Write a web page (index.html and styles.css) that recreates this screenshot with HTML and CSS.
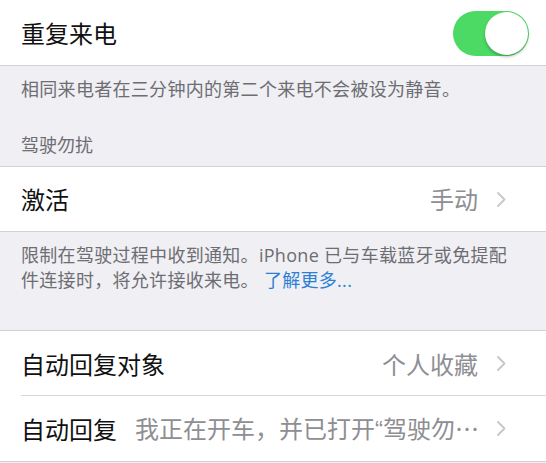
FILE: index.html
```html
<!DOCTYPE html>
<html lang="zh-CN">
<head>
<meta charset="utf-8">
<link rel="stylesheet" href="styles.css">
</head>
<body>
<div class="page">
  <div class="group group-first">
    <div class="row">
      <span class="label">重复来电</span>
      <span class="toggle"><span class="knob"></span></span>
    </div>
  </div>
  <div class="footer">相同来电者在三分钟内的第二个来电不会被设为静音。</div>
  <div class="header">驾驶勿扰</div>
  <div class="group">
    <div class="row row-short">
      <span class="label">激活</span>
      <span class="value">手动</span>
      <svg class="chev" viewBox="0 0 9 15" width="9" height="15"><path d="M1 1 L7.5 7.5 L1 14" fill="none" stroke="#c7c7cc" stroke-width="1.8" stroke-linecap="round" stroke-linejoin="round"/></svg>
    </div>
  </div>
  <div class="footer footer-gap">限制在驾驶过程中收到通知。iPhone 已与车载蓝牙或免提配<br>件连接时，将允许接收来电。 <span class="link">了解更多...</span></div>
  <div class="group">
    <div class="row row-inset">
      <span class="label">自动回复对象</span>
      <span class="value">个人收藏</span>
      <svg class="chev" viewBox="0 0 9 15" width="9" height="15"><path d="M1 1 L7.5 7.5 L1 14" fill="none" stroke="#c7c7cc" stroke-width="1.8" stroke-linecap="round" stroke-linejoin="round"/></svg>
    </div>
    <div class="row">
      <span class="label">自动回复</span>
      <span class="value value-left">我正在开车，并已打开<span class="quote">“</span>驾驶勿…</span>
      <svg class="chev chev-auto" viewBox="0 0 9 15" width="9" height="15"><path d="M1 1 L7.5 7.5 L1 14" fill="none" stroke="#c7c7cc" stroke-width="1.8" stroke-linecap="round" stroke-linejoin="round"/></svg>
    </div>
  </div>
</div>
</body>
</html>
```

FILE: styles.css
```css
html, body {
  margin: 0;
  padding: 0;
  background: #efeff4;
}
body {
  font-family: "Noto Sans CJK SC", "Noto Sans", sans-serif;
  width: 546px;
  height: 463px;
  overflow: hidden;
}
.page {
  display: flex;
  flex-direction: column;
}
.group {
  background: #fff;
  border-top: 1px solid #d2d1d6;
  border-bottom: 1px solid #d2d1d6;
}
.group-first {
  border-top: none;
}
.row {
  height: 65px;
  display: flex;
  align-items: center;
  padding-left: 21px;
  padding-right: 40px;
  position: relative;
}
.row-short {
  height: 64px;
}
.row-inset::after {
  content: "";
  position: absolute;
  left: 21px;
  right: 0;
  bottom: 0;
  height: 1px;
  background: #d8d7dc;
}
.group-first .row {
  height: 65px;
  padding-right: 17px;
}
.label {
  font-size: 24px;
  color: #111;
  flex: none;
  line-height: 30px;
}
.value {
  margin-left: auto;
  font-size: 24px;
  color: #8e8e93;
  line-height: 30px;
  white-space: nowrap;
}
.value-left {
  margin-left: 18px;
  flex: none;
}
.quote {
  font-family: "Liberation Sans", sans-serif;
}
.chev {
  margin-left: 19px;
  flex: none;
}
.chev-auto {
  margin-left: auto;
}
.toggle {
  margin-left: auto;
  width: 76px;
  height: 45px;
  border-radius: 23px;
  background: #4cd964;
  position: relative;
  margin-top: 2px;
}
.knob {
  position: absolute;
  right: 1px;
  top: 1px;
  width: 43px;
  height: 43px;
  border-radius: 50%;
  background: #fff;
  box-shadow: 0 2px 3px rgba(0,0,0,0.25);
}
.footer {
  font-family: "Open Sans", "Noto Sans CJK SC", sans-serif;
  font-size: 18px;
  line-height: 25px;
  letter-spacing: 0.3px;
  color: #6d6d72;
  padding: 11px 21px 0 21px;
  height: 25px;
  white-space: nowrap;
}
.footer-gap {
  height: 50px;
  padding-bottom: 37px;
}
.header {
  font-size: 18px;
  line-height: 25px;
  color: #6d6d72;
  padding: 30px 21px 9px 21px;
}
.link {
  color: #2d7fd6;
}
```
